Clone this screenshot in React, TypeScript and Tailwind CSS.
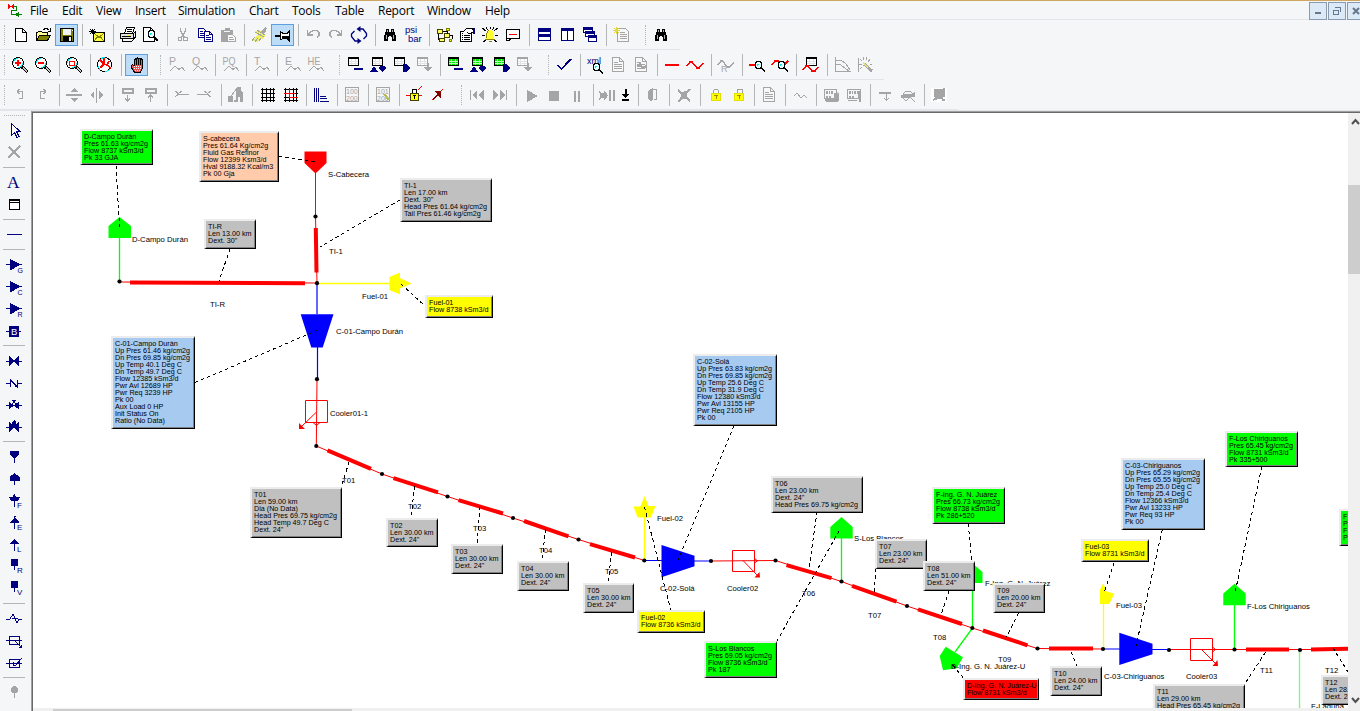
import type { ReactNode } from "react";

const K = "#000000";
const N = "#000080";
const G = "#a5a5a5";
const R = "#ff0000";
const Y = "#ffff00";
const C = "#00e8f0";

type PProps = { d: string; c?: string; f?: string; w?: number };
const P = ({ d, c = K, f = "none", w = 1 }: PProps) => <path d={d} stroke={c} fill={f} strokeWidth={w} />;
const F = ({ d, c = K }: { d: string; c?: string }) => <path d={d} fill={c} />;
const T = ({ x, y, s = 8, c = G, children }: { x: number; y: number; s?: number; c?: string; children: string }) => (
  <text x={x} y={y} fontSize={s} fill={c} fontFamily="'Liberation Sans', sans-serif">
    {children}
  </text>
);

const Lens = ({ x = 7, y = 6 }: { x?: number; y?: number }) => (
  <g>
    <circle cx={x + 2.5} cy={y + 3} r={3.5} fill="#e6ffff" stroke={K} />
    <P d={`M${x + 1} ${y + 4}v-2h2`} c={C} />
    <P d={`M${x + 5} ${y + 5.5}l4 4`} w={2} />
  </g>
);
const BigLens = ({ children }: { children?: ReactNode }) => (
  <g>
    <circle cx={7} cy={7} r={5.5} fill="#fff" stroke={K} />
    <path d="M2.5 7a4.5 4.5 0 0 1 4.500-4.500M11.500 7a4.500 4.500 0 0 1-4.500 4.500" stroke={C} fill="none" />
    <P d="M11 11l5.500 5" w={3} />
    <P d="M12 11.500l4 4" c="#c8c8c8" />
    {children}
  </g>
);
const Grid = ({ c = K, f = "#fff", x = 2, y = 1 }: { c?: string; f?: string; x?: number; y?: number }) => (
  <g>
    <rect x={x + 0.5} y={y + 0.5} width={10} height={8} fill={f} stroke={c} />
    <P d={`M${x} ${y + 1}h11`} c={c} w={2} />
    <P d={`M${x + 1} ${y + 4.5}h9M${x + 1} ${y + 6.5}h9M${x + 3.5} ${y + 2}v6M${x + 7.5} ${y + 2}v6`} c={f === "#fff" ? "#e4e4e4" : "#b8ffb8"} />
  </g>
);
const DocLines = () => (
  <g>
    <P d="M3.500 1.500h7l4 4v10h-11zM10.500 1.500v4h4" c={G} f="#f8f8f8" />
    <P d="M5 6.500h4M5 8.500h8M5 10.500h8M5 12.500h8" c={G} />
  </g>
);
const Binoc = () => (
  <g>
    <F d="M5 3h3v3h2v-3h3v3h1v3h1v6h-4v-4h-1v-1h-2v1h-1v4h-4v-6h1v-3h1z" />
    <P d="M5.500 9v4M12.500 9v4M6.500 4v2M11.500 4v2" c="#b0b0b0" />
  </g>
);
const Wave = ({ t, two }: { t: string; two?: boolean }) => (
  <g>
    <text
      x={two ? 1.5 : 2}
      y={8.5}
      fontSize={10.5}
      fill={G}
      textLength={two ? 13 : undefined}
      lengthAdjust="spacingAndGlyphs"
      fontFamily="'Liberation Sans', sans-serif"
    >
      {t}
    </text>
    <P d="M3 15l2-2 3-3 4 3.500 3-2.500 3 4" c={G} />
  </g>
);
const Tri = ({ l }: { l: string }) => (
  <g>
    <F d="M5 4l9 4.500v2l-9 5z" c={N} />
    <P d="M1 9.500h16" c={N} />
    <rect x={12} y={11} width={6} height={7} fill="#f5f6f8" />
    <T x={12.500} y={17.500} s={7} c={N}>{l}</T>
  </g>
);
const Lock = ({ open, x = 4 }: { open?: boolean; x?: number }) => (
  <g transform={`translate(${x} 0)`}>
    <P d={open ? "M4.500 8v-4l1-1h3l1 1v4" : "M3.500 8v-3.500l1-1h3l1 1v3.500"} c="#a0a0a0" />
    <rect x={1.500} y={7.500} width={9} height={7} fill={Y} stroke="#e0e000" />
    <P d="M4 9.500h4M6 10v3" c="#a09000" />
  </g>
);

const icons: Record<string, ReactNode> = {
  new: <P d="M4.500 2.500h7l4 4v9h-11zM11.500 2.500v4h4" f="#fff" />,
  open: (
    <g>
      <P d="M2.500 14.500v-8h1l1-1h3l1 1h5v3" f="#ffff90" />
      <P d="M2.500 14.500l3-5h11l-3 5z" f="#808000" />
      <P d="M9 3.500h1l1-1h2l2.500 2M16.500 2v3.500h-3" />
    </g>
  ),
  save: (
    <g>
      <rect x={3.500} y={2.500} width={13} height={13} fill="#808000" stroke={K} />
      <rect x={6} y={3} width={8} height={6} fill="#f2f2f2" stroke="none" />
      <F d="M6 10h9v6h-9z" />
      <F d="M12 11h2v4h-2z" c="#e8e8e8" />
      <F d="M15 4h1v1h-1z" c="#fff" />
    </g>
  ),
  mail: (
    <g>
      <rect x={5.500} y={6.500} width={11} height={9} fill="#ffff40" stroke={K} />
      <P d="M6 7l5 4.500 5-4.500M6 15l3.500-4M16 15l-3.500-4" c="#808000" />
      <P d="M4.500 3v5M1 5.500h7M2 3l5 5M7 3l-2 2M2 8l2-2" />
    </g>
  ),
  print: (
    <g>
      <P d="M5.500 7.500l2-6h8l-2 6z" f="#fff" />
      <P d="M8 3.500h5M7.500 5.500h5" />
      <P d="M1.500 7.500h13v5h-13z" f="#e0e0e0" />
      <P d="M14.500 7.500l2-2v5l-2 2M3.500 12.500v3h9l4-4M3 10h9" f="none" />
      <F d="M9 9h2v1h-2z" c={Y} />
    </g>
  ),
  preview: (
    <g>
      <P d="M1.500 1.500h7l4 4v10h-11zM8.500 1.500v4h4" f="#fff" />
      <Lens x={7} y={5} />
      <P d="M12 11l4 4" w={2} />
    </g>
  ),
  cut: (
    <g>
      <P d="M7.500 2v3l4 6M12.500 2v3l-4 6" c={G} w={1.200} />
      <circle cx={7} cy={13} r={2} stroke={G} fill="none" />
      <circle cx={12.500} cy={13} r={2} stroke={G} fill="none" />
    </g>
  ),
  copy: (
    <g>
      <P d="M2.500 2.500h5l3 3v6h-8zM4 5.500h3M4 7.500h5M4 9.500h5" c={N} f="#fff" />
      <P d="M8.500 5.500h5l3 3v7h-8zM13.500 5.500v3h3M10 9.500h3M10 11.500h5M10 13.500h5" c={N} f="#fff" />
    </g>
  ),
  paste: (
    <g>
      <F d="M2 4h4v-2h5v2h3v12h-12z" c={G} />
      <P d="M5 5.500h6" c="#f5f6f8" />
      <P d="M8.500 8.500h5l3 3v4h-8zM10 11.500h4M10 13.500h5" c={G} f="#f8f8f8" />
    </g>
  ),
  brush: (
    <g>
      <F d="M11 5l4-4 2 1-1 3-3 3z" c={G} />
      <F d="M5 5l5-1 5 6-3 3-5 3-4-1 4-6z" c="#f0f060" />
      <P d="M2 15l3-4M5 16l3-4M9 15l2-3M5 6l9 5M7 4l8 5" c={G} />
    </g>
  ),
  pin: (
    <g>
      <P d="M2 10h5" w={2} />
      <P d="M7.500 5v9M8 6.500h1l1 1h4l2-2v9l-2-2h-4l-2 1" f="#fff" />
      <F d="M9 10h7v3h-7z" />
    </g>
  ),
  undo: <P d="M3.500 4v5h5M4 8.500l3-3 3-1h3l2 2v3l-2 2" c={G} w={1.200} />,
  redo: <P d="M14.500 4v5h-5M14 8.500l-3-3-3-1h-3l-2 2v3l2 2" c={G} w={1.200} />,
  sync: (
    <g shapeRendering="auto">
      <P d="M10 3h3l3.500 4.500v2.500l-3 3" c={N} w={1.300} />
      <P d="M8 15h-3l-3.500-4.500v-2.500l3-3" c={N} w={1.300} />
      <F d="M10.500 0v6l-4-3zM7.500 12v6l4-3z" c={N} />
    </g>
  ),
  binoc: <Binoc />,
  psi: (
    <g>
      <T x={1} y={7} s={9.500} c={N}>psi</T>
      <T x={4} y={15.500} s={9.500} c={N}>bar</T>
    </g>
  ),
  relation: (
    <g>
      <P d="M2.500 3.500h5v4h-5zM9.500 7.500h5v4h-5zM4.500 12.500h5v3h-5z" c="#404000" f="#ffff60" />
      <P d="M11.500 2.500h3v2h-3zM14.500 13.500h2v2h-2z" c="#808000" f={Y} />
      <P d="M8 5.500h4v2M3.500 8v6M15 9.500h2v3" />
    </g>
  ),
  props: (
    <g>
      <P d="M2.500 5.500h11v10h-11z" f="#fff" />
      <P d="M4 7.500h1M6 9.500h6M4 11.500h1M6 11.500h6M4 13.500h1M6 13.500h6M4 9.500h1" />
      <P d="M5 6l3-3 5-1 3 2-1 2-4 2-2-2" f="#fff" />
      <F d="M15 2h2v6h-2z" c={N} />
    </g>
  ),
  alarm: (
    <g>
      <P d="M1 2l4 3M17 2l-4 3M1 9.500h3M14 9.500h3M2 16l3-2M16 16l-3-2M9.500 1v2M5 1l1.500 3M13 1l-1.500 3" />
      <F d="M7 4h4l2 4v4l1 2h-10l1-2v-4z" c="#ffff30" />
      <P d="M4 13.500h10M8 15.500h3M7.500 4l-2 4v4" c="#908000" />
    </g>
  ),
  comment: (
    <g>
      <P d="M2.500 3.500h13v9h-9l-1 2h-3z" f="#fff" />
      <P d="M5 8h8" c={R} />
      <P d="M3 12.500h3" />
    </g>
  ),
  hsplit: (
    <g>
      <P d="M3.500 2.500h12v12h-12z" c={N} f="#fff" />
      <P d="M3 4h13M3 9.500h13" c={N} w={3} />
      <P d="M3 14.500h13" c={N} />
    </g>
  ),
  vsplit: (
    <g>
      <P d="M3.500 2.500h6v12h-6zM9.500 2.500h6v12h-6z" c={N} f="#fff" />
      <P d="M3 3.500h13" c={N} w={3} />
    </g>
  ),
  cascade: (
    <g>
      <P d="M2.500 1.500h9v5h-9z" c={N} f="#fff" />
      <P d="M2 3h10" c={N} w={2} />
      <P d="M4.500 5.500h9v5h-9z" c={N} f="#fff" />
      <P d="M4 7h10" c={N} w={2} />
      <P d="M7.500 9.500h8v6h-8z" c={N} f="#fff" />
      <P d="M7 11h9" c={N} w={2} />
    </g>
  ),
  newlist: (
    <g>
      <P d="M5.500 2.500h8l3 3v10h-11z" c={G} f="#f8f8f8" />
      <P d="M8 6.500h5M8 8.500h7M8 10.500h7M8 12.500h7" c={G} />
      <P d="M4.500 1v7M1 4.500h7M2 2l5 5M7 2l-5 5" c="#e0d840" />
    </g>
  ),
  zin: <BigLens><P d="M4 7h6M7 4v6" c={R} w={1.500} /></BigLens>,
  zout: <BigLens><P d="M4 7h6" c={R} w={1.500} /></BigLens>,
  zfit: <BigLens><P d="M4.500 5.500h5v4h-5z" c={R} w={1.500} /></BigLens>,
  globe: (
    <g>
      <circle cx={8.500} cy={8.500} r={7} fill="#fff" stroke={K} />
      <path d="M3 5a7 7 0 0 1 6-3.500M15 11a7 7 0 0 1-6 4.500M2 10l2 4" stroke={C} fill="none" />
      <P d="M4 4l4 4 3 1 4 3M8 2v6l-4 4M13 5l-2 4" c={R} w={1.500} />
    </g>
  ),
  hand: (
    <g>
      <P d="M4.500 9.500l1-1 2 2v-6.500l1-1 1 1v-1l1-1 1 1v-1h2v2l1-1 1 1v8l-2 4h-6l-3-4z" f="#f05050" />
      <P d="M9.500 4v5M11.500 3v6M13.500 4v5" />
      <path d="M7 10h8M7 12h7M8 14h6" stroke="#fff" strokeDasharray="1 1" />
    </g>
  ),
  P: <Wave t="P" />,
  Q: <Wave t="Q" />,
  PQ: <Wave t="PQ" two />,
  T: <Wave t="T" />,
  E: <Wave t="E" />,
  HE: <Wave t="HE" two />,
  t1: <g><Grid /><P d="M8 13h9" c={N} w={2} /></g>,
  t2: <g><Grid x={3} /><F d="M1 16h8l-4-6zM9 12l2-2h4l2 2-4 4z" c={N} /></g>,
  t3: <g><Grid /><F d="M11 8h3l4 4-4 4h-3z" c={N} /></g>,
  t4: <g><Grid c={G} /><F d="M12 7h2v4h3l-4 5-4-5h3z" c={G} /></g>,
  g1: <g><Grid f="#00e800" /><P d="M8 13h9" c={N} w={2} /></g>,
  g2: <g><Grid f="#00e800" x={3} /><F d="M1 16h8l-4-6zM9 12l2-2h4l2 2-4 4z" c={N} /></g>,
  g3: <g><Grid f="#00e800" /><F d="M11 8h3l4 4-4 4h-3z" c={N} /></g>,
  check: <P d="M2.500 9l4 4 9.500-10" c={N} w={1.800} />,
  xml: (
    <g>
      <T x={1} y={8} s={9} c={N}>xml</T>
      <Lens x={8} y={8} />
    </g>
  ),
  doc: <DocLines />,
  docw: <g><DocLines /><P d="M5 10l3-2 3 4 3-2" c={G} w={2} /></g>,
  rline: <P d="M2 9h14" c={R} w={2} />,
  rwave: <P d="M1 10l3-4h2l5 6h2l4-5" c={R} w={1.600} />,
  gwave: <g><P d="M1 9l3-4h2l4 6h3l4-5" c={G} w={1.400} /><T x={4} y={16} s={9}>R</T></g>,
  rlens: <g><P d="M1 9h8" c={R} w={2} /><Lens x={8} y={6} /></g>,
  wlens: <g><P d="M1 9l3-4h3l3 3M13 9l4-4" c={R} w={1.600} /><Lens x={8} y={6} /></g>,
  twave: <g><Grid x={4} /><P d="M1 14l3-4h2l4 5h3l3-4" c={R} w={1.600} /></g>,
  curve: <P d="M2.500 1v14.500h15M3 4h5l5 4 4 6M3 8l5 1 8 6" c={G} />,
  wand: (
    <g>
      <P d="M8 8l8 7" c={G} w={3} />
      <P d="M7 7l5 4" c="#e8e070" w={1.500} />
      <P d="M2 2v14M4 3l2 2M10 1l1 3M14 3l-2 3M14 8h2M3 9l3-1M4 13l2-2M7 1l1 3" c={G} />
    </g>
  ),
  rotl: <P d="M6 5.500h5.500v7h-4M8.500 3l-2 2.500 2 2.500" c={G} w={1.400} />,
  rotr: <P d="M12 5.500h-5.500v7h4M9.500 3l2 2.500-2 2.500" c={G} w={1.400} />,
  flipv: <g><F d="M9 2l4 4h-8zM9 16l4-4h-8z" c={G} /><P d="M1 9h16" c={G} w={2} /></g>,
  fliph: <g><F d="M2 9l4-4v8zM15 9l-4-4v8z" c={G} /><P d="M8.500 2v15" c={G} w={1.500} /></g>,
  down: <g><P d="M4 3h10v4h-10z" c={G} w={2} /><P d="M8.500 9v6M6 12.500l2.500 2.500 2.500-2.500" c={G} w={1.400} /></g>,
  up: <g><P d="M4 3h10v4h-10z" c={G} w={2} /><P d="M8.500 9v7M6 11.500l2.500-2.500 2.500 2.500" c={G} w={1.400} /></g>,
  brl: <P d="M2 5l4 3-4 3M5 8.500h11M6 7l3-2" c={G} />,
  brr: <P d="M15 5l-4 3 4 3M12 8.500h-11M11 7l-3-2" c={G} />,
  horse: <g><F d="M8 3l3-2h3v4l2 2v9h-3v-5h-2v5h-4v-2h2v-7z" c={G} /><P d="M1.500 10h4v5h-4zM4 10l4-5" c={G} f={G} /></g>,
  grid: <P d="M4.500 2v14M8.500 2v14M12.500 2v14M15.500 2v14M3 3.500h14M3 7.500h14M3 11.500h14M3 14.500h14" />,
  gridr: (
    <g>
      <P d="M4.500 2v14M8.500 2v14M12.500 2v14M15.500 2v14M3 3.500h14M3 7.500h14M3 11.500h14M3 14.500h14" />
      <P d="M3 7.500h11M8.500 3v9M8 11.500h9" c={R} />
    </g>
  ),
  lshape: <P d="M2.500 2v14M4.500 2v14M6.500 2v14M8 10.500h6M8 12.500h7M8 15.500h9" c={N} />,
  n100: <g><P d="M2.500 1.500h13v14h-13z" c={G} /><T x={3} y={8} s={7}>100</T><T x={3} y={15} s={7}>200</T></g>,
  n101: <g><P d="M2.500 1.500h13v14h-13z" c={G} /><T x={3} y={8} s={7}>101</T><T x={3} y={15} s={7}>200</T><P d="M10 8l5 6" c="#c0b850" w={2} /></g>,
  lockr: (
    <g>
      <P d="M1 9.500h16M13 4l4-4" c={R} />
      <P d="M7.500 7v-3l1-1h2l1 1v3" />
      <rect x={5.500} y={7.500} width={8} height={7} fill={Y} stroke="#404000" />
      <P d="M8 9.500h3M9.500 10v3" />
    </g>
  ),
  rarrow: <g><P d="M4 14l6-6M12 6l3-3" c={R} /><F d="M6 5h7v7l-3-2-5 4-1-1 5-5z" c="#800000" /></g>,
  first: <F d="M2 4h1v10h-1zM9 4v10l-5-5zM16 4v10l-6-5z" c={G} />,
  last: <F d="M15 4h1v10h-1zM9 4v10l5-5zM2 4v10l6-5z" c={G} />,
  play: <F d="M5 4v12l11-6z" c={G} />,
  stop: <F d="M4 5h10v10h-10z" c={G} />,
  pause: <F d="M6 5h2v11h-2zM10 5h2v11h-2z" c={G} />,
  step: <F d="M2 4l2 3h3v-3l4 5.500-4 5.500v-3h-3l-2 3 1-5zM12 4h2v11h-2zM16 4h2v11h-2z" c={G} />,
  stepdown: <g><P d="M8.500 3v7M5 14h7" w={2} /><F d="M5 8h7l-3.500 4z" /></g>,
  door: <g><P d="M9 3.500h3.500v10h-3" c={G} /><F d="M4 5l5-3v11l-2 3-3-3z" c={G} /></g>,
  cross: <g><P d="M3 4l12 11M15 3l-5 6-7 7" c={G} w={1.800} /><F d="M4 6h4l5-2-1 5 1 4h-4l-4 1 1-5z" c={G} /></g>,
  lock: <Lock />,
  unlock: <Lock open />,
  zig: <P d="M3 10l3-3 4 5 3-3 3 3" c={G} />,
  panel: (
    <g>
      <P d="M2.500 3.500h12v9h-12z" c={G} />
      <P d="M5 5v3M7.500 5v3M10 5v3M5 10v2M8 10v2M3 14h13M4 15.500h12" c={G} w={1.500} />
      <F d="M12 7h5v8h-5z" c={G} />
      <P d="M15 6v2" c="#d8d040" />
    </g>
  ),
  panel2: (
    <g>
      <P d="M2.500 3.500h13v9h-13z" c={G} />
      <P d="M5 5v3M7.500 5v3M10 5v3M5 10v2M8 10v2M3 14.500h9" c={G} w={1.500} />
      <F d="M12 5h4v11h-2z" c={G} />
    </g>
  ),
  hdown: <g><P d="M3 7h12" c={G} w={2} /><P d="M10.500 8v7M8.500 12.500l2 2 2-2" c={G} w={1.200} /></g>,
  plane: (
    <g>
      <F d="M2 9l3-1h8l3-2v5h-3l-2 1h-9z" c={G} />
      <P d="M4 8l3-3h4l3 3M4 12l3 3 3-3M11 11l5 5" c={G} />
    </g>
  ),
  monitor: <g><F d="M1 2h16v14h-16z" c="#fff" /><F d="M4 3h9v-1h2v9h-2v2h2v2h-3v-2h-4l-5 2v-2l3-2h-2z" c={G} /></g>,
  cursor: <P d="M6.500 2.500v12l3-3 2.500 5 2-1-2.500-5h3.500z" c={N} f="#fff" />,
  del: <P d="M4 4l11 11M15 3l-12 12" c={G} w={2.500} />,
  A: (
    <text x={2} y={15} fontSize={17.5} fill={N} fontFamily="'Liberation Serif', serif">A</text>
  ),
  table: <g><rect x={4.500} y={4.500} width={10} height={10} fill="#fff" stroke={K} /><P d="M4 5h11M4 7.500h11" /></g>,
  line: <P d="M2 9.500h15" c={N} />,
  G: <Tri l="G" />,
  C: <Tri l="C" />,
  R: <Tri l="R" />,
  B: (
    <g>
      <P d="M1 10.500h15" c={N} w={1} />
      <F d="M4 5h10v11h-10z" c={N} />
      <T x={6} y={14} s={9.500} c="#fff">B</T>
    </g>
  ),
  v1: <g><P d="M1 10.500h16" c={N} /><F d="M4 5l5 4 5-4v10l-5-4-5 4z" c={N} /></g>,
  v2: <P d="M1 10.500h4M5.500 14v-7l7 7v-7M12 10.500h5M10 13.500h3" c={N} />,
  v3: <g><P d="M1 10.500h16M7 5l4 4M11 5l-4 4M8 5.500h2" c={N} /><F d="M4 7l5 3 5-3v7l-5-3-5 3z" c={N} /></g>,
  v4: <g><P d="M1 10.500h16" c={N} w={1} /><F d="M4 5l3 2v-2l2-2 2 2v2l3-2v10l-5-4-5 4z" c={N} /></g>,
  s1: <g><F d="M5 4h9v4l-4 3h-1l-4-3z" c={N} /><P d="M9.500 9v7" c={N} w={1} /></g>,
  s2: <g><F d="M9.500 4l5 4v4h-10v-4z" c={N} /><P d="M9.500 12v4" c={N} w={1} /></g>,
  sF: <g><F d="M9.500 3l2 3h4l-3 4h-6l-3-4h4z" c={N} /><P d="M9.500 9v7" c={N} w={1} /><T x={12} y={17} s={8} c={N}>F</T></g>,
  sE: <g><F d="M9 3h2l-1 2 4 4h-9l4-3z" c={N} /><P d="M9.500 8v8M5 9.500h9" c={N} w={1} /><T x={12} y={17} s={8} c={N}>E</T></g>,
  sL: <g><F d="M9.500 4l5 5h-10z" c={N} /><P d="M9.500 8v8" c={N} w={1} /><T x={12} y={17} s={8} c={N}>L</T></g>,
  sR: <g><F d="M6 2h7v7h-7z" c={N} /><P d="M9.500 8v5" c={N} /><T x={12} y={16} s={8} c={N}>R</T></g>,
  sV: <g><F d="M6 2h7v7h-7z" c={N} /><P d="M9.500 8v5" c={N} /><T x={12} y={16} s={8} c={N}>V</T></g>,
  z1: <P d="M1 10h4l3-5 4 9 2-4h3M7 9.500h6" c={N} />,
  z2: <g><P d="M4.500 5.500h10v8h-10zM1 9.500h16M9 9l7 7" c={N} /><F d="M17 17v-4l-4 4z" c={N} /></g>,
  z3: <g><P d="M4.500 6.500h10v8h-10zM1 10.500h16M8 9v3h3l6-7" c={N} /></g>,
  pinp: <g><circle cx={9.500} cy={6.500} r={3.500} fill={G} /><P d="M9.500 8v7" c={G} w={1} /></g>,
};

function Icon({ n }: { n: string }) {
  return (
    <svg viewBox="0 0 18 18" className="h-[18px] w-[18px] shrink-0" shapeRendering="crispEdges" fill="none">
      {icons[n]}
    </svg>
  );
}

function Toolbar({ items, line }: { items: string; line: string }) {
  return (
    <div className="relative flex h-[30px] items-start">
      <div className="flex h-[30px] w-[9px] items-center">
        <Grip />
      </div>
      {items.split(" ").map((it, i) => {
        if (it === "|") return <div key={i} className="mt-1 ml-1 h-[22px] w-1 border-l border-[#b4b5b7]" />;
        if (it === ":")
          return (
            <div key={i} className="flex h-[30px] w-[17px] items-center pl-2">
              <Grip />
            </div>
          );
        const on = it.startsWith("*");
        const name = on ? it.slice(1) : it;
        return (
          <div
            key={i}
            className={
              "mt-1 flex h-[22px] items-center " +
              (name === "step" ? "w-5 " : name === "stepdown" ? "w-[17px] " : "w-[23px] pl-0.5 ") +
              (on ? "bg-[#bcdcf8] outline outline-1 -outline-offset-1 outline-[#5f9fdd]" : "")
            }
          >
            <Icon n={name} />
          </div>
        );
      })}
      <div className={"absolute bottom-0 left-0 h-px bg-[#e4e5e8] " + line} />
    </div>
  );
}

function Grip() {
  return <div className="ml-1 h-5 w-0 border-l border-dotted border-[#b4b5b7]" />;
}

const menu: [string, string][] = [
  ["File", "w-8"],
  ["Edit", "w-[34px]"],
  ["View", "w-[39px]"],
  ["Insert", "w-[43px]"],
  ["Simulation", "w-[71px]"],
  ["Chart", "w-[43px]"],
  ["Tools", "w-[43px]"],
  ["Table", "w-[43px]"],
  ["Report", "w-[49px]"],
  ["Window", "w-[58px]"],
  ["Help", "w-10"],
];

const side =
  "cursor del | A table | line | G C R B | v1 v2 v3 v4 | s1 s2 sF sE sL sR sV | z1 z2 z3 | pinp".split(" ");

type Box = [number, number, number, number, string, string];
const green = "bg-[#00ff00]";
const gray = "bg-[#c0c0c0]";
const yellow = "bg-[#ffff00]";
const blue = "bg-[#a6caf0]";
const boxes: Box[] = [
  [80, 129, 73, 36, green, "D-Campo Durán|Pres 61.63 kg/cm2g|Flow 8737 kSm3/d|Pk 33 GJA"],
  [199, 131, 80, 51, "bg-[#ffcbaa]", "S-cabecera|Pres 61.64 Kg/cm2g|Fluid Gas Refinor|Flow 12399 Ksm3/d|Hval 9188.32 Kcal/m3|Pk 00 Gja"],
  [400, 178, 92, 44, gray, 'TI-1|Len 17.00 km|Dext. 30"|Head Pres 61.64 kg/cm2g|Tail Pres 61.46 kg/cm2g'],
  [204, 219, 52, 30, gray, 'TI-R|Len 13.00 km|Dext. 30"'],
  [425, 295, 68, 23, yellow, "Fuel-01|Flow 8738 kSm3/d"],
  [111, 336, 84, 93, blue, "C-01-Campo Durán|Up Pres 61.46 kg/cm2g|Dn Pres 69.85 kg/cm2g|Up Temp 40.1 Deg C|Dn Temp 49.7 Deg C|Flow 12385 kSm3/d|Pwr Avl 12689 HP|Pwr Req 3239 HP|Pk 00|Aux Load 0 HP|Init Status On|Ratio (No Data)"],
  [250, 487, 92, 51, gray, 'T01|Len 59.00 km|Dia (No Data)|Head Pres 69.75 kg/cm2g|Head Temp 49.7 Deg C|Dext. 24"'],
  [386, 518, 52, 29, gray, 'T02|Len 30.00 km|Dext. 24"'],
  [451, 544, 52, 30, gray, 'T03|Len 30.00 km|Dext. 24"'],
  [517, 561, 52, 30, gray, 'T04|Len 30.00 km|Dext. 24"'],
  [583, 583, 51, 30, gray, 'T05|Len 30.00 km|Dext. 24"'],
  [637, 610, 68, 23, yellow, "Fuel-02|Flow 8736 kSm3/d"],
  [693, 354, 84, 72, blue, "C-02-Solá|Up Pres 63.83 kg/cm2g|Dn Pres 69.85 kg/cm2g|Up Temp 25.6 Deg C|Dn Temp 31.9 Deg C|Flow 12380 kSm3/d|Pwr Avl 13155 HP|Pwr Req 2105 HP|Pk 00"],
  [771, 476, 92, 37, gray, 'T06|Len 23.00 km|Dext. 24"|Head Pres 69.75 kg/cm2g'],
  [704, 641, 73, 37, green, "S-Los Blancos|Pres 69.05 kg/cm2g|Flow 8736 kSm3/d|Pk 187"],
  [932, 487, 73, 37, green, "F-Ing. G. N. Juárez|Pres 66.73 kg/cm2g|Flow 8738 kSm3/d|Pk 286+520"],
  [875, 539, 52, 30, gray, 'T07|Len 23.00 km|Dext. 24"'],
  [923, 561, 52, 30, gray, 'T08|Len 51.00 km|Dext. 24"'],
  [993, 583, 52, 30, gray, 'T09|Len 20.00 km|Dext. 24"'],
  [963, 678, 76, 22, "bg-[#ff0000]", "D-Ing. G. N. Juárez-U|Flow 8731 kSm3/d"],
  [1050, 666, 52, 30, gray, 'T10|Len 24.00 km|Dext. 24"'],
  [1121, 458, 84, 72, blue, "C-03-Chiriguanos|Up Pres 65.29 kg/cm2g|Dn Pres 65.55 kg/cm2g|Up Temp 25.0 Deg C|Dn Temp 25.4 Deg C|Flow 12366 kSm3/d|Pwr Avl 13233 HP|Pwr Req 93 HP|Pk 00"],
  [1081, 539, 68, 23, yellow, "Fuel-03|Flow 8731 kSm3/d"],
  [1225, 431, 73, 36, green, "F-Los Chiriguanos|Pres 65.45 kg/cm2g|Flow 8731 kSm3/d|Pk 335+500"],
  [1153, 684, 92, 37, gray, "T11|Len 29.00 km|Head Pres 65.45 kg/cm2g"],
  [1321, 675, 52, 30, gray, 'T12|Len 28.00 km|Dext. 24"'],
  [1339, 509, 73, 37, green, "F|P|F|P"],
];

const labels: [number, number, string][] = [
  [132, 239, "D-Campo Durán"],
  [328, 174, "S-Cabecera"],
  [329, 251, "TI-1"],
  [210, 304, "TI-R"],
  [362, 296, "Fuel-01"],
  [336, 331, "C-01-Campo Durán"],
  [330, 413, "Cooler01-1"],
  [342, 480, "T01"],
  [408, 506, "T02"],
  [473, 528, "T03"],
  [539, 550, "T04"],
  [605, 571, "T05"],
  [657, 518, "Fuel-02"],
  [660, 588, "C-02-Solá"],
  [727, 588, "Cooler02"],
  [854, 538, "S-Los Blancos"],
  [802, 593, "T06"],
  [868, 615, "T07"],
  [933, 637, "T08"],
  [998, 659, "T09"],
  [985, 583, "F-Ing. G. N. Juárez"],
  [951, 666, "D-Ing. G. N. Juárez-U"],
  [1116, 605, "Fuel-03"],
  [1104, 676, "C-03-Chiriguanos"],
  [1186, 676, "Cooler03"],
  [1247, 606, "F-Los Chiriguanos"],
  [1260, 670, "T11"],
  [1325, 670, "T12"],
  [1311, 706, "F-Laguna"],
];

const dots = [
  [315.5, 216.5], [119.5, 281.5], [317, 283.2], [317, 379.2], [316.3, 446], [382, 474], [447.5, 496.5],
  [513, 518], [578.5, 539.5], [644.3, 560.5], [711, 561], [775.5, 560.5], [841.5, 581.5], [907, 606],
  [972.3, 628], [1037.5, 648.5], [1103, 649], [1169, 650], [1234.5, 649.5], [1300, 650],
];

const pipes =
  "M315.8 228L316.500 272.500M130 282.600L305 283.200M327.500 450.300L371 468.800M393.500 478.100L438 492.300M458.500 500.100L503 513.500M524 521L568.500 536.300M590 544.100L635 557.500M786.500 565.100L831.500 578.200M852 585.800L896.500 601.600M918 609.400L962 624M983 630.500L1027.500 645.300M1049 648.500H1093M1246 649.500H1289M1311 649.600L1350 648.800";

const leads =
  "M116 166L119.500 227M279 156.500L315 162M400 200L320 247M230 249L219 281M401 284L425 306M195 382.500L317 330.500M349 462L341 488M414.500 486L411 518M480 507L477 544M545.500 529L542 562M611.500 552L608 584M644.500 507L671 611M734 426L678 560M817 512L809 568M839 531L777 641M876 569L874 593M949 591L940.700 616M968.300 524L972.700 572M1018.700 613L1006.700 636.700M952.700 665L963.500 678M1114 562.700L1104 592.700M1162.300 530L1136 645.700M1261.700 467L1235 593M1071 651.700L1076.700 666M1265.700 652L1244 685M1333 648L1348 672";

function Diagram() {
  return (
    <svg viewBox="33 113 1315 595" className="absolute top-0 left-0 h-[595px] w-[1315px]">
      <g stroke="#00ff00" fill="none" strokeWidth={1.300}>
        <path d="M119.500 238V281M841.500 538V581M972.500 583V628L955 652M1234.500 605V649" />
        <path d="M1299.500 650V708" stroke="#70ff70" />
      </g>
      <path d="M317 283.500H392M1103.500 604V649M644.500 517V560" stroke="#ffff00" strokeWidth={1.300} fill="none" />
      <path
        d="M315.500 173V216L317 283L119.500 282M317 379L316.300 446L382 474L447.500 496.500L513 518L578.500 539.500L644.300 560.500M711 561L775.500 560.500L841.500 581.500L907 606L972.300 628L1037.500 648.500L1103 649M1169 649.500H1348"
        stroke="#ff0000"
        fill="none"
      />
      <path d="M317 283V314M317.500 347V379M644 560.500H662M694 561H711M1103 649H1120M1152 649.500H1169" stroke="#0000ff" fill="none" strokeWidth={1.200} />
      <path d={pipes} stroke="#ff0000" strokeWidth={4} fill="none" />
      <g fill="#00ff00">
        <path d="M119.500 217L131 226V238H108.500V226ZM841.500 517L852.700 527V538.500H830.300V527ZM972 563L982.500 572V583H961V572ZM1234.500 583.700L1245.700 593.500V605.300H1223.300V593.500Z" />
        <path d="M945.700 646.700L963 657.300L956.700 668.300L943 670.300L939.700 656Z" />
      </g>
      <path d="M304.500 151.500H326.500V163L315.500 173.500L304.500 163Z" fill="#ff0000" />
      <g fill="#ffff00">
        <path d="M389.500 277L400 272.500V278L411.500 283.500L400 288.500V294.500L389.500 290Z" />
        <path d="M644.500 496L648.500 506H655.500L651 517.500H637.700L633.500 506.500H640.500Z" />
        <path d="M1103.300 583.300L1106.700 591.500L1114.300 593.500L1109.300 604H1100V589.500Z" />
      </g>
      <path
        d="M300.700 314.300H333.500L322.700 347.500H311.300ZM661.500 545L694.500 555.700V566.300L661.500 577.300ZM1119.300 632.700L1152.500 643.700V654.300L1119.300 665Z"
        fill="#0000ff"
      />
      <g stroke="#ff0000" fill="none">
        <path d="M305.500 400.500H327.500V422.500H305.500ZM732.500 550.500H754.500V571.500H732.500ZM1190.500 638.500H1212.500V660.500H1190.500Z" />
        <path d="M313 422.500L316.500 425.500L320 422.500M316 412.500L301 427M754 558L757.500 560.800L754 563.500M743 560.500L758 576M1212 646.500L1215.500 649.500L1212 652.500M1201 649L1216 664" />
      </g>
      <path d="M299 429V423L305 429ZM760 577.500H754.500L759.500 572ZM1218 666H1212.500L1217.500 660Z" fill="#ff0000" />
      {dots.map(([x, y], i) => (
        <circle key={i} cx={x} cy={y} r={2.1} fill="#000" />
      ))}
    </svg>
  );
}

function Workspace() {
  return (
    <div className="relative h-[595px] w-[1315px] overflow-hidden bg-white font-['Liberation_Sans',sans-serif] text-black">
      <Diagram />
      {labels.map(([x, y, t], i) => (
        <div key={i} className="absolute text-[7.7px] leading-[10px] whitespace-pre" style={{ left: x - 33, top: y - 117 }}>
          {t}
        </div>
      ))}
      <svg viewBox="33 113 1315 595" className="absolute top-0 left-0 h-[595px] w-[1315px]">
        <path d={leads} stroke="#000" strokeDasharray="3.5 3" fill="none" shapeRendering="crispEdges" />
      </svg>
      {boxes.map(([x, y, w, h, bg, t], i) => (
        <div
          key={i}
          className={
            "absolute overflow-hidden border-t-2 border-r border-b border-l-2 border-t-[#ececec] border-r-black border-b-black border-l-[#ececec] pt-0.5 pl-0.5 text-[7.2px] leading-[7px] whitespace-pre shadow-[inset_-1px_-1px_0_#808080] " +
            bg
          }
          style={{ left: x - 33, top: y - 113, width: w, height: h }}
        >
          {t.split("|").map((l, j) => (
            <div key={j}>{l}</div>
          ))}
        </div>
      ))}
    </div>
  );
}

const winBtn = "flex h-[18px] w-[18px] shrink-0 items-center justify-center border border-[#8a9bb0] bg-[#dce9f7]";

export default function App() {
  return (
    <div className="flex h-[711px] w-[1360px] flex-col overflow-hidden bg-[#f5f6f8] font-['Open_Sans','Noto_Sans',sans-serif]">
      <div className="h-px shrink-0 bg-[#cfa760]" />
      <div className="flex h-[19px] shrink-0 items-start border-b border-[#e4e5e8] text-black">
        <div className="w-[30px] pt-[3px] pl-2">
          <svg viewBox="0 0 16 14" className="h-[14px] w-4" shapeRendering="crispEdges">
            <path d="M0 0l3 2 3-2v5l-3-2-3 2z" fill="#f00" />
            <path d="M6 2.500h2.500v4h-5v4h10M8 2.500v4" stroke="#008000" fill="none" />
            <path d="M7 10.500l4-3v6z" fill="#008000" />
          </svg>
        </div>
        {menu.map(([t, w]) => (
          <div key={t} className={"shrink-0 pt-px text-[12px] leading-[18px] tracking-[-0.26px] whitespace-nowrap " + w}>
            {t}
          </div>
        ))}
        <div className="mt-px -mr-[5px] ml-auto flex items-center gap-px">
          <div className={winBtn}>
            <div className="mt-1 h-0.5 w-1.5 bg-[#66788c]" />
          </div>
          <div className={winBtn}>
            <svg viewBox="0 0 10 10" className="h-2.5 w-2.5" shapeRendering="crispEdges">
              <path d="M3 1.500h5.500v4M1.500 4.500h5v4h-5zM1 4.500h6" stroke="#66788c" fill="none" strokeWidth={1.500} />
            </svg>
          </div>
          <div className={winBtn}>
            <svg viewBox="0 0 10 10" className="h-2.5 w-2.5">
              <path d="M2 2l6 6M8 2l-6 6" stroke="#66788c" strokeWidth={2} />
            </svg>
          </div>
        </div>
      </div>
      <div className="flex h-[91px] shrink-0 flex-col border-b border-[#e4e5e8]">
        <Toolbar
          line="w-[680px]"
          items="new open *save | mail | print preview | cut copy paste | brush *pin | undo redo sync | binoc psi | relation props alarm comment | hsplit vsplit cascade | newlist : binoc"
        />
        <Toolbar
          line="w-[884px]"
          items="zin zout | zfit | globe | *hand : P Q | PQ | T | E HE : t1 t2 t3 t4 | g1 g2 g3 t4 : check | xml doc docw | rline rwave | gwave | rlens wlens | twave | curve wand"
        />
        <Toolbar
          line="w-[958px]"
          items="rotl rotr | flipv fliph | down up | brl brr | horse | grid gridr | lshape | n100 | n101 | lockr rarrow : first last | play stop pause | step stepdown | door | cross | lock unlock | doc | zig | panel panel2 | hdown plane | monitor"
        />
      </div>
      <div className="flex h-[600px] shrink-0">
        <div className="flex w-[31px] shrink-0 flex-col">
          <div className="mt-[4px] mb-[3px] ml-1 h-px w-[21px] border-t border-dotted border-[#b4b5b7]" />
          {side.map((n, i) =>
            n === "|" ? (
              <div key={i} className="mt-1 ml-[3px] h-1 w-[22px] border-t border-[#b4b5b7]" />
            ) : (
              <div key={i} className="flex h-[22px] items-center pl-[5px]">
                <Icon n={n} />
              </div>
            ),
          )}
        </div>
        <div className="flex grow flex-col border-t border-l border-[#a0a0a0]">
          <div className="flex grow flex-col border-t border-l border-[#696969]">
            <div className="flex h-[595px] shrink-0">
              <Workspace />
              <div className="flex grow flex-col items-center bg-[#f0f0f0]">
                <svg viewBox="0 0 12 17" className="h-[17px] w-3">
                  <path d="M4 11l3.500-4 3.500 4" stroke="#505050" strokeWidth={2} fill="none" />
                </svg>
                <div className="mt-[55px] h-[89px] w-full bg-[#cdcdcd]" />
                <svg viewBox="0 0 12 17" className="mt-auto h-[17px] w-3">
                  <path d="M4 7l3.500 4 3.500-4" stroke="#505050" strokeWidth={2} fill="none" />
                </svg>
              </div>
            </div>
            <div className="h-[3px] shrink-0 bg-[#f0f0f0] pt-px pl-5">
              <div className="h-0.5 w-[299px] bg-[#cdcdcd]" />
            </div>
          </div>
        </div>
      </div>
    </div>
  );
}
